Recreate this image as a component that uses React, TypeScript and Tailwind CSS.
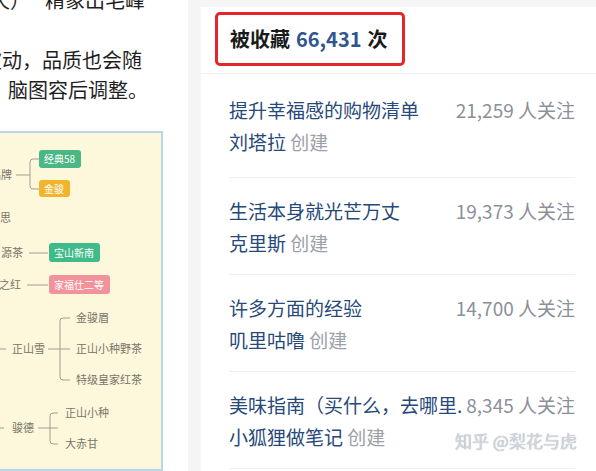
import React from "react";

const rows = [
  { title: "提升幸福感的购物清单", author: "刘塔拉", count: "21,259" },
  { title: "生活本身就光芒万丈", author: "克里斯", count: "19,373" },
  { title: "许多方面的经验", author: "叽里咕噜", count: "14,700" },
  { title: "美味指南（买什么，去哪里.", author: "小狐狸做笔记", count: "8,345" },
];

function MindMap() {
  const t = "#7a7468";
  const l = "#a39d90";
  return (
    <svg width="171" height="340" viewBox="-10 135 171 340" className="block">
      <g fontSize="11" fill={t} fontFamily="'Noto Sans CJK SC', sans-serif">
        <text x="12" y="181" textAnchor="end">品牌</text>
        <text x="11" y="224" textAnchor="end">茶思</text>
        <text x="23" y="259" textAnchor="end">源茶</text>
        <text x="21" y="291" textAnchor="end">之红</text>
        <text x="12" y="355">正山雪</text>
        <text x="76" y="324">金骏眉</text>
        <text x="76" y="355">正山小种野茶</text>
        <text x="76" y="386">特级皇家红茶</text>
        <text x="12" y="434">骏德</text>
        <text x="65" y="419">正山小种</text>
        <text x="65" y="450">大赤甘</text>
      </g>
      <g stroke={l} strokeWidth="1" fill="none">
        <path d="M16 177 H30 M39 161 H33 Q30 161 30 164 V188 Q30 191 33 191 H39" />
        <path d="M29 255 H48" />
        <path d="M27 287 H48" />
        <path d="M-10 351 H6 M48 351 H70 M70 320 H63 Q60 320 60 323 V379 Q60 382 63 382 H70" />
        <path d="M-10 430 H4 M38 430 H58 M58 415 H53 Q50 415 50 418 V443 Q50 446 53 446 H58" />
      </g>
      <g fontSize="10" fill="#fff" fontFamily="'Noto Sans CJK SC', sans-serif">
        <rect x="39" y="152" width="42" height="18" rx="3" fill="#4bb784" />
        <text x="44" y="165">经典58</text>
        <rect x="39" y="182" width="31" height="17" rx="3" fill="#f1b52c" />
        <text x="44" y="195">金骏</text>
        <rect x="49" y="245" width="51" height="19" rx="3" fill="#3fba8a" />
        <text x="54" y="259">宝山新南</text>
        <rect x="49" y="277" width="61" height="19" rx="3" fill="#f2929b" />
        <text x="54" y="291">家福仕二等</text>
      </g>
    </svg>
  );
}

export default function App() {
  return (
    <div className="relative flex h-[471px] w-[596px] overflow-hidden bg-[#f5f5f5] font-['Noto_Sans_CJK_SC','Noto_Sans',sans-serif]">
      {/* article column */}
      <div className="flex h-full w-[188px] flex-col overflow-hidden bg-white">
        <div className="h-[133px] overflow-hidden text-[20px] leading-[30px] text-[#1f1f1f]">
          <div className="-mt-[15px] ml-[-10px] whitespace-nowrap">
            天）<span className="ml-[15px]">精象出毛峰</span>
          </div>
          <div className="mt-[30px] ml-[-18px] whitespace-nowrap">波动，品质也会随</div>
          <div className="ml-[8px] whitespace-nowrap">脑图容后调整。</div>
        </div>
        <div className="ml-[-12px] h-[340px] w-[175px] border-2 border-[#b9d6ec] bg-[#fdf8dc]">
          <MindMap />
        </div>
      </div>

      {/* collection card */}
      <div className="ml-[13px] mt-[7px] flex-1 bg-white">
        <div className="h-[67px] border-b border-[#f0f1f3] pl-[14px] pt-[5px]">
          <div className="inline-flex h-[54px] items-center rounded-[5px] border-[3px] border-[#e4262a] pl-[12px] pr-[14px] text-[20px] font-bold text-[#1a1a1a]">
            被收藏 <span className="mx-[6px] text-[#2f568d]">66,431</span> 次
          </div>
        </div>
        <div className="pl-[28px] pr-[21px]">
          {rows.map((r, i) => (
            <div
              key={r.title}
              className={
                i === 0
                  ? "border-b border-[#eef0f3] pb-[19px] pt-[20px] text-[19px] leading-[32px]"
                  : "border-b border-[#eef0f3] pb-[15px] pt-[17px] text-[19px] leading-[32px]"
              }
            >
              <div className="flex justify-between whitespace-nowrap">
                <span className="text-[#27497a]">{r.title}</span>
                <span className="text-[#8b9099]">{r.count} 人关注</span>
              </div>
              <div className="whitespace-nowrap">
                <span className="text-[#27497a]">{r.author}</span>{" "}
                <span className="text-[#9ca1a9]">创建</span>
              </div>
            </div>
          ))}
        </div>
      </div>

      <div className="absolute left-[455px] top-[428px] whitespace-nowrap text-[17px] text-[#d3d6dc] [text-shadow:0_0_1px_#9aa0a8]">
        知乎 @梨花与虎
      </div>
    </div>
  );
}
